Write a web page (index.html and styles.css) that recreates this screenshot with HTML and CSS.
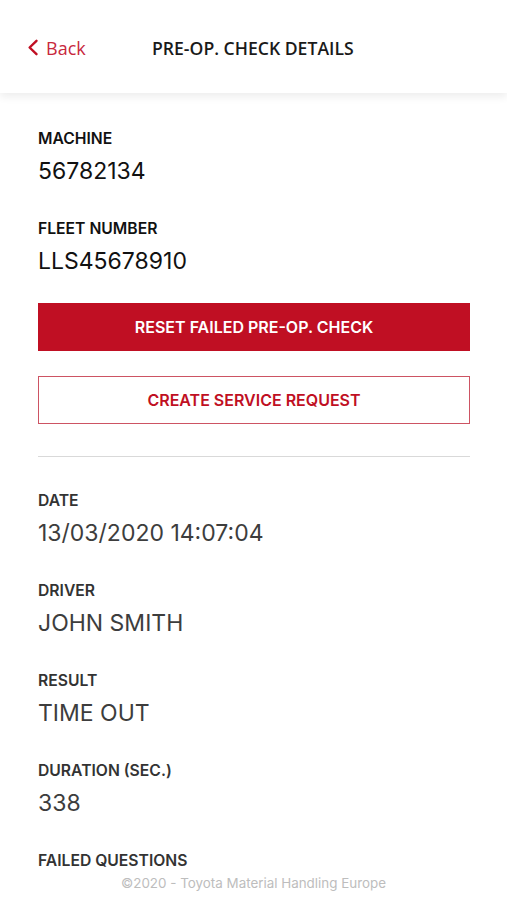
FILE: index.html
```html
<!DOCTYPE html>
<html lang="en">
<head>
    <meta charset="UTF-8">
    <meta name="viewport" content="width=device-width, initial-scale=1.0">
    <title>Pre-op. Check Details</title>
    <link rel="stylesheet" href="styles.css">
</head>
<body>
    <header class="top-bar">
        <a class="back-link" href="#">
            <svg class="back-icon" width="12" height="17" viewBox="0 0 12 17">
                <path d="M9.5 1.8 L2.6 8.5 L9.5 15.2" fill="none" stroke="#c00f23" stroke-width="2.4" stroke-linecap="round" stroke-linejoin="round"/>
            </svg>
            <span>Back</span>
        </a>
        <h1 class="page-title">PRE-OP. CHECK DETAILS</h1>
    </header>

    <main class="content">
        <div class="field dark">
            <div class="field-label">MACHINE</div>
            <div class="field-value">56782134</div>
        </div>
        <div class="field dark">
            <div class="field-label">FLEET NUMBER</div>
            <div class="field-value">LLS45678910</div>
        </div>

        <div class="actions">
            <button class="btn btn-primary">RESET FAILED PRE-OP. CHECK</button>
            <button class="btn btn-outline">CREATE SERVICE REQUEST</button>
        </div>

        <hr class="divider">

        <div class="field">
            <div class="field-label">DATE</div>
            <div class="field-value">13/03/2020 14:07:04</div>
        </div>
        <div class="field">
            <div class="field-label">DRIVER</div>
            <div class="field-value">JOHN SMITH</div>
        </div>
        <div class="field">
            <div class="field-label">RESULT</div>
            <div class="field-value">TIME OUT</div>
        </div>
        <div class="field">
            <div class="field-label">DURATION (SEC.)</div>
            <div class="field-value">338</div>
        </div>
        <div class="field">
            <div class="field-label">FAILED QUESTIONS</div>
        </div>
    </main>

    <footer class="copyright">©2020 - Toyota Material Handling Europe</footer>
</body>
</html>
```

FILE: styles.css
```css
* {
    box-sizing: border-box;
    margin: 0;
    padding: 0;
}

body {
    font-family: Inter, 'Liberation Sans', sans-serif;
    background: #fff;
    color: #3a3a3a;
    width: 507px;
    height: 900px;
    overflow: hidden;
    position: relative;
}

.top-bar {
    height: 93px;
    display: flex;
    align-items: center;
    padding: 0 0 0 27px;
    background: #fff;
    box-shadow: 0 4px 8px rgba(0,0,0,0.07);
    position: relative;
}

.back-link {
    display: flex;
    align-items: center;
    gap: 7px;
    color: #c8283c;
    text-decoration: none;
    font-family: 'Open Sans', sans-serif;
    font-size: 18px;
    width: 125px;
    padding-top: 2px;
}

.page-title {
    font-family: 'Open Sans', sans-serif;
    font-weight: 600;
    font-size: 17.6px;
    color: #1a1a1a;
    padding-top: 2px;
}

.content {
    padding: 37px 37px 0 38px;
}

.field {
    margin-bottom: 35px;
}

.field-label {
    font-size: 15.7px;
    font-weight: 600;
    color: #333;
    line-height: 18px;
    margin-bottom: 9px;
}

.field-value {
    font-size: 23px;
    line-height: 28px;
    color: #3d3d3d;
}

.field.dark .field-label {
    color: #111;
}

.field.dark .field-value {
    color: #111;
}

.actions {
    display: flex;
    flex-direction: column;
    gap: 25px;
    margin-top: -7px;
}

.btn {
    height: 48px;
    width: 100%;
    font-family: Inter, 'Liberation Sans', sans-serif;
    font-size: 16px;
    font-weight: 600;
    cursor: pointer;
}

.btn-primary {
    background: #c00f23;
    color: #fff;
    border: none;
}

.btn-outline {
    background: #fff;
    color: #c00f23;
    border: 1px solid #cd5463;
}

.divider {
    border: none;
    border-top: 1px solid #d9d9d9;
    margin: 32px 0 35px;
}

.copyright {
    position: absolute;
    left: 0;
    right: 0;
    bottom: 9px;
    text-align: center;
    font-size: 13.4px;
    color: #bdbdbd;
}
```
